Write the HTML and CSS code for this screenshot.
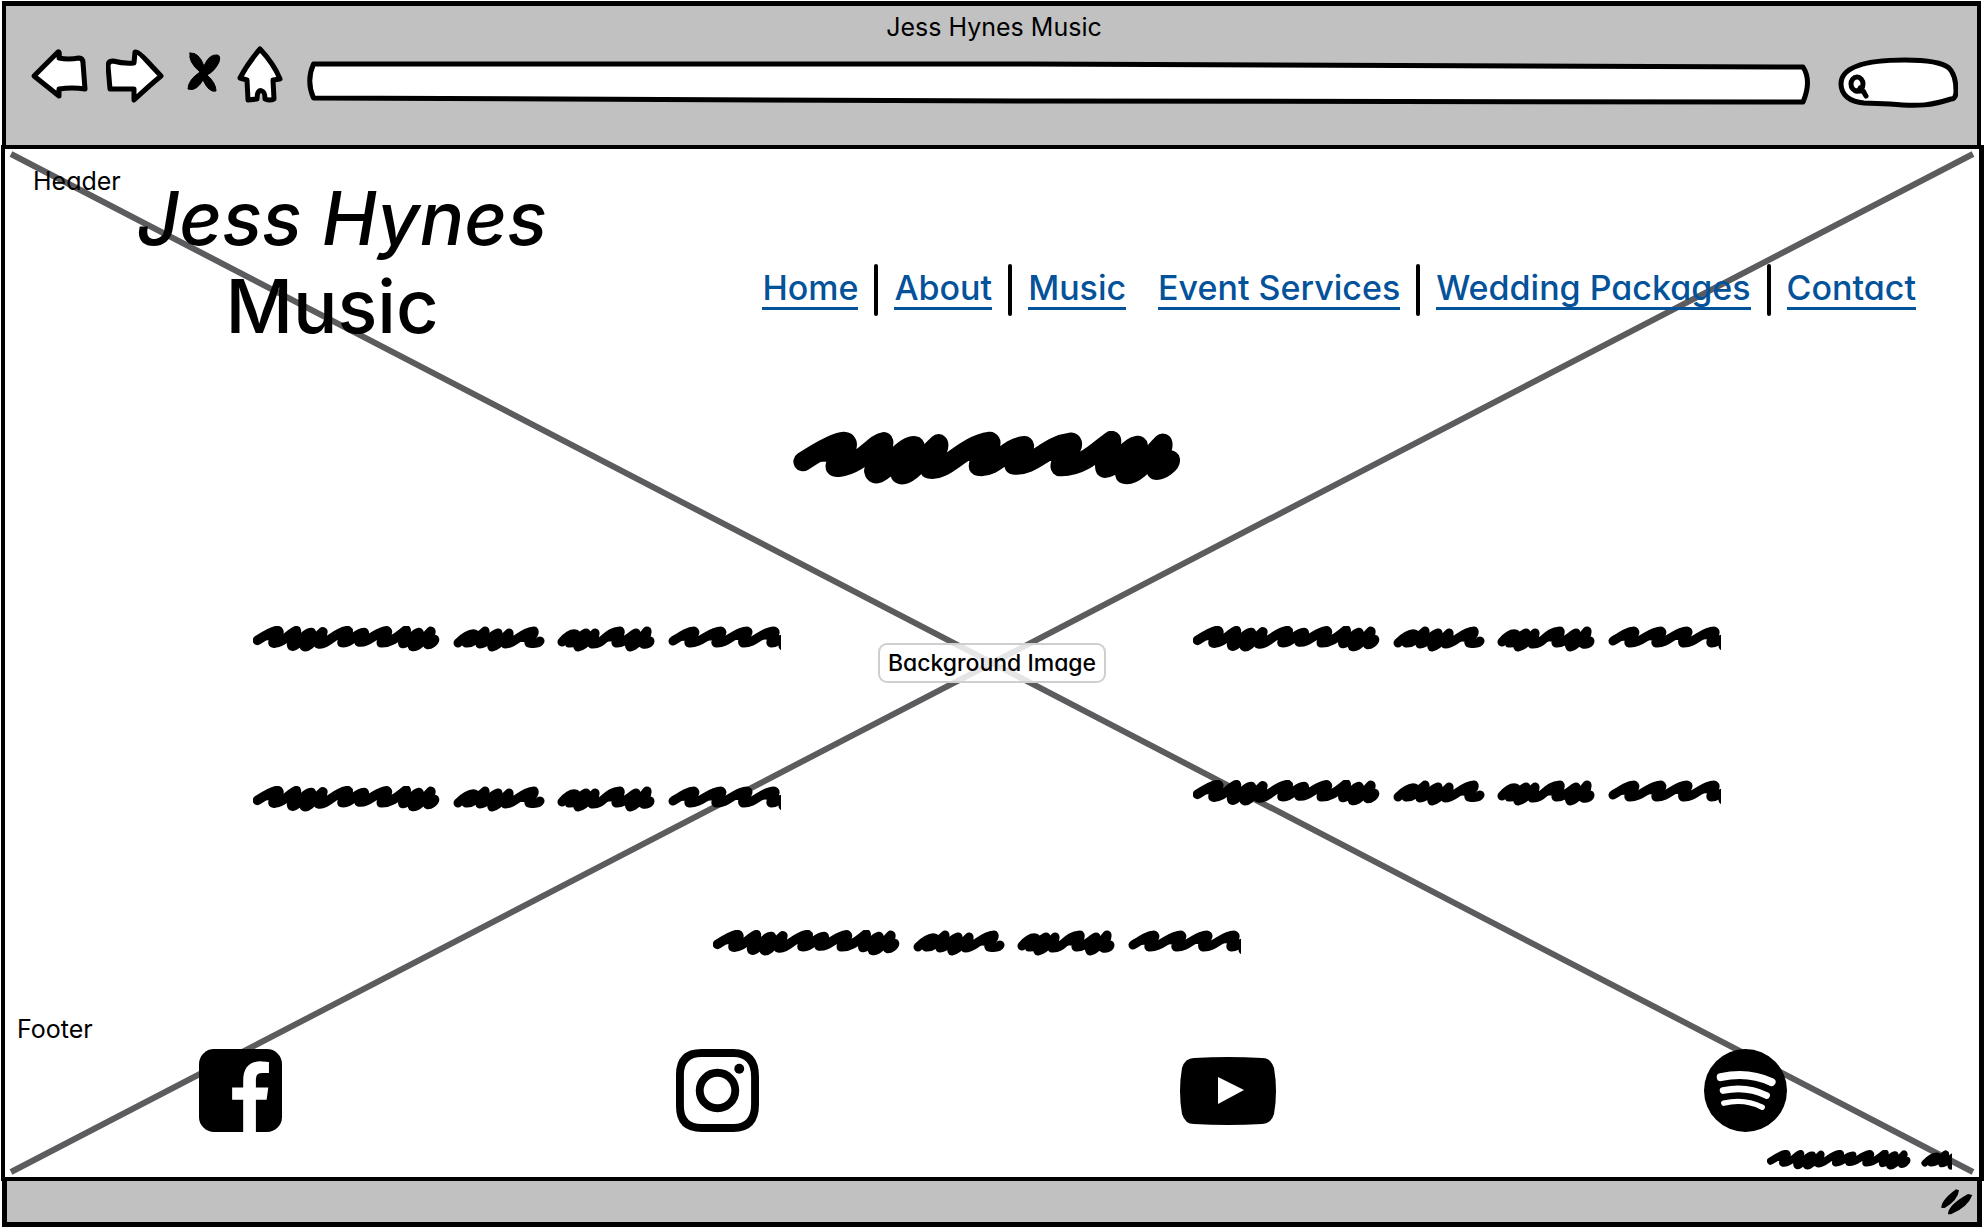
FILE: index.html
```html
<!DOCTYPE html>
<html lang="en">
<head>
<meta charset="utf-8">
<meta name="viewport" content="width=device-width, initial-scale=1">
<title>Jess Hynes Music</title>
<link rel="stylesheet" href="styles.css">
</head>
<body>
<svg class="defs" aria-hidden="true">
  <defs>
    <path id="long-word" d="M97 152 C140 124 195 92 220 91 C242 92 226 122 205 145 C190 163 190 172 205 169 C270 163 310 96 340 92 C344 110 315 150 310 180 C314 205 350 170 375 142 C405 108 425 103 434 104 C430 130 390 160 390 190 C410 202 460 140 505 98 C512 115 475 150 478 174 C530 184 575 104 660 91 C675 100 625 135 625 166 C680 174 705 108 764 104 C765 125 725 135 732 162 C790 170 830 102 905 93 C922 105 870 140 871 167 C940 170 990 112 1026 88 C1030 115 1000 145 1006 172 C1050 165 1070 108 1106 103 C1108 130 1060 160 1066 190 C1100 200 1145 130 1180 96 C1186 120 1150 150 1160 178 C1175 180 1205 158 1203 147"/>
    <g id="phrase">
      <use href="#long-word" transform="translate(-11 -10) scale(.16)" stroke-width="60"/>
      <path d="M205 17 C211 11 218 7 222 8 C223 12 214 12 213 17 C221 18 228 8 232 5 C233 9 226 12 227 18 C234 18 239 8 245 7 C246 12 237 16 239 21 C246 20 252 10 256 7 C257 12 250 15 252 18 C262 18 268 6 281 5 C283 9 274 13 276 17 C282 18 286 17 287 15"/>
      <path d="M309 16 C314 10 319 7 323 8 C324 12 315 14 316 17 C322 18 328 9 333 7 C334 12 323 16 325 21 C333 20 338 10 342 7 C343 12 336 15 339 18 C351 19 352 6 367 5 C369 9 362 13 363 17 C371 18 378 9 383 7 C384 12 374 16 377 21 C384 20 390 9 394 5 C395 11 389 14 390 18 C393 19 397 17 397 15"/>
      <path d="M420 15 C428 10 435 5 441 5 C445 7 434 13 436 17 C448 18 456 5 468 5 C472 7 461 13 463 17 C475 18 482 5 494 5 C498 7 487 13 490 17 C502 18 509 5 521 5 C525 7 516 13 518 17 C522 18 527 13 530 13"/>
      <path d="M530 13 V20"/>
    </g>
  </defs>
</svg>

<header class="chrome">
  <div class="window-title">Jess Hynes Music</div>
  <div class="toolbar">
    <button class="tool back" type="button" aria-label="Back"><svg viewBox="30 46 58 56"><path d="M34 75 L58 51 Q60 50 59 57 Q68 59 79 57 Q83 57 83 62 L85 88 Q72 86 59 88 L59 95 Z"/></svg></button>
    <button class="tool forward" type="button" aria-label="Forward"><svg viewBox="106 46 58 56"><path d="M110 88 L108 65 Q108 60 113 60 Q124 63 134 62 L135 51 Q138 50 147 60 L161 75 Q150 84 134 99 L134 88 Z"/></svg></button>
    <button class="tool stop" type="button" aria-label="Stop"><svg viewBox="186 46 36 56"><path d="M190 52 Q199 51 204 65 Q209 53 217 54 Q221 54 219 61 Q215 70 207 74 Q216 82 216 90 Q209 92 203 79 Q196 91 188 88 Q188 79 200 71 Q188 61 190 52 Z"/></svg></button>
    <button class="tool home" type="button" aria-label="Home page"><svg viewBox="236 44 48 60"><path d="M260 48 Q274 63 280 78 L273 79 L274 98 Q270 100 265 98 Q265 91 262 90 Q257 88 257 98 L248 99 L247 79 L240 77 Q248 62 260 48 Z"/></svg></button>
    <div class="address">
      <svg viewBox="0 0 100 44" preserveAspectRatio="none" aria-hidden="true"><path d="M.3 3 L48 3 L99.6 6 Q100.2 20 99.6 41 L48 40 L.3 37 Q-.2 20 .3 3 Z"/></svg>
      <input type="text" aria-label="Address">
    </div>
    <div class="search">
      <svg viewBox="1838 56 120 52" aria-hidden="true"><path d="M1841 83 C1841 64 1870 59 1905 59 C1928 59 1943 62 1949 67 C1955 73 1956 83 1956 90 Q1956 98 1951 98 C1932 104 1920 106 1890 103 L1864 102 C1850 101 1841 94 1841 83 Z"/><ellipse cx="1857" cy="83" rx="6" ry="7"/><path d="M1856 90 L1863 90 L1866 95 M1860 87 L1864 91"/></svg>
      <input type="search" aria-label="Search">
    </div>
  </div>
</header>

<main class="page">
  <div class="backdrop">
    <svg viewBox="0 0 100 100" preserveAspectRatio="none" aria-hidden="true"><path d="M0 0 L100 100 M0 100 L100 0"/></svg>
    <span class="backdrop-label">Background Image</span>
  </div>

  <section class="masthead">
    <span class="note">Header</span>
    <h1><em>Jess Hynes</em><br>Music&nbsp;</h1>
    <nav>
      <a href="#home">Home</a><i></i><a href="#about">About</a><i></i><a href="#music">Music</a><a class="apart" href="#events">Event Services</a><i></i><a href="#weddings">Wedding Packages</a><i></i><a href="#contact">Contact</a>
    </nav>
  </section>

  <svg class="scribble headline" viewBox="67 60 1168 162" aria-hidden="true"><use href="#long-word" stroke-width="58"/></svg>

  <section class="phrases">
    <svg class="scribble phrase" viewBox="0 0 528 26" aria-hidden="true"><use href="#phrase"/></svg>
    <svg class="scribble phrase" viewBox="0 0 528 26" aria-hidden="true"><use href="#phrase"/></svg>
    <svg class="scribble phrase" viewBox="0 0 528 26" aria-hidden="true"><use href="#phrase"/></svg>
    <svg class="scribble phrase raised" viewBox="0 0 528 26" aria-hidden="true"><use href="#phrase"/></svg>
  </section>
  <svg class="scribble phrase closing" viewBox="0 0 528 26" aria-hidden="true"><use href="#phrase"/></svg>

  <footer class="footer">
    <span class="note">Footer</span>
    <div class="social">
      <a href="#facebook" aria-label="Facebook"><svg width="83" height="83" viewBox="597 148 248 248"><rect x="597" y="148" width="248" height="248" rx="45"/><path class="cut" d="M729 397 V300 H696 V263 H729 V245 C729 200 750 184 785 185 L806 187 V220 H785 C770 220 767 228 767 245 V263 H804 L799 300 H767 V397 Z"/></svg></a>
      <a href="#instagram" aria-label="Instagram"><svg width="83" height="83" viewBox="0 0 84 84"><path class="line" d="M26 4 H58 Q80 4 80 28 V56 Q80 80 58 80 H26 Q4 80 4 58 V26 Q4 4 26 4 Z"/><circle class="line" cx="42" cy="42" r="18"/><circle cx="64" cy="20" r="5"/></svg></a>
      <a href="#youtube" aria-label="YouTube"><svg width="96" height="68" viewBox="0 0 96 68"><path d="M14 1 Q48 -1 82 1 Q91 1 94 11 Q98 34 94 57 Q91 67 82 67 Q48 69 14 67 Q5 67 2 57 Q-2 34 2 11 Q5 1 14 1 Z"/><path class="cut" d="M38 20 L64 33 L38 47 Z"/></svg></a>
      <a href="#spotify" aria-label="Spotify"><svg width="83" height="83" viewBox="72 58 248 248"><circle cx="196" cy="182" r="124"/><path class="arc" stroke-width="24" d="M122 142 Q205 124 274 157"/><path class="arc" stroke-width="20" d="M129 182 Q199 167 259 197"/><path class="arc" stroke-width="16" d="M131 220 Q192 205 246 232"/></svg></a>
    </div>
    <svg class="scribble credit" viewBox="0 0 240 26" aria-hidden="true"><use href="#phrase"/></svg>
  </footer>
</main>

<div class="statusbar">
  <svg width="32" height="26" viewBox="783 486 96 78" aria-hidden="true"><path d="M784 543 Q783 520 828 487 L837 490 Q834 520 794 543 Z M804 562 Q803 535 864 501 L877 504 Q864 540 813 562 Z"/></svg>
</div>
</body>
</html>
```
FILE: styles.css
```css
* { box-sizing: border-box; }

body {
  display: flex;
  flex-direction: column;
  min-height: 100vh;
  margin: 0;
  padding: 1px 0 3px 1px;
  background: #fff;
  color: #000;
  font-family: Inter, "Liberation Sans", sans-serif;
  font-feature-settings: "cv11";
  font-size: 25px;
  line-height: 30px;
}

svg { display: block; }
.defs { position: absolute; width: 0; height: 0; }

/* Browser window */
.chrome {
  margin: 0 3px 0 1px;
  padding: 6px 19px 37px 24px;
  border: solid #000;
  border-width: 5px 4px 0;
  background: #c1c1c1;
}
.window-title { text-align: center; }
.toolbar { display: flex; align-items: center; height: 66px; }
.toolbar svg { width: 100%; height: 100%; fill: #fff; stroke: #000; stroke-width: 5px; stroke-linejoin: round; stroke-linecap: round; }
.tool { flex: none; width: 58px; height: 56px; padding: 0; border: 0; background: none; }
.forward { margin-left: 18px; }
.stop { width: 36px; margin-left: 22px; }
.toolbar .stop svg { fill: #000; stroke-width: 1px; }
.home { width: 48px; height: 60px; margin-left: 14px; }
.address, .search { position: relative; height: 44px; }
.address { flex: 1; margin: 16px 29px 0 25px; }
.address path { vector-effect: non-scaling-stroke; }
.address svg { overflow: visible; }
.search { flex: none; width: 120px; height: 52px; margin-top: 16px; }
.search ellipse, .search ellipse + path { fill: none; }
.address input, .search input {
  position: absolute;
  inset: 8px 12px;
  width: calc(100% - 24px);
  padding: 0;
  border: 0;
  background: none;
  font: inherit;
}
.search input { left: 36px; width: calc(100% - 48px); }

/* Page */
.page {
  position: relative;
  display: flex;
  flex: 1;
  flex-direction: column;
  border: solid #000;
  border-width: 4px 5px 4px 4px;
}
.page > * { position: relative; }
.page > .backdrop { position: absolute; inset: 5px 6px; display: grid; place-items: center; }
.backdrop svg { position: absolute; width: 100%; height: 100%; overflow: visible; }
.backdrop path { fill: none; stroke: #5c5c5e; stroke-width: 6px; vector-effect: non-scaling-stroke; }
.backdrop-label {
  position: relative;
  padding: 3px 8px;
  border: 2px solid #cfcfcf;
  border-radius: 9px;
  background: rgba(255, 255, 255, .84);
  font-size: 23px;
  font-weight: 500;
}

.masthead { display: flex; padding: 17px 63px 0 28px; }
h1 {
  margin: 8px 0 0 16px;
  font-size: 74px;
  font-weight: 500;
  line-height: 88px;
  text-align: center;
  white-space: nowrap;
}
nav { display: flex; align-items: center; height: 52px; margin: 98px 0 0 auto; gap: 16px; }
nav a {
  padding-bottom: 2px;
  border-bottom: 3px solid #04529a;
  color: #04529a;
  font-size: 34px;
  font-weight: 500;
  line-height: 34px;
  text-decoration: none;
  white-space: nowrap;
}
nav i { width: 4px; height: 52px; border-radius: 2px; background: #000; }
.apart { margin-left: 16px; }

.scribble { fill: #000; stroke: #000; stroke-width: 9px; stroke-linecap: round; stroke-linejoin: round; }
.headline { width: 388px; height: 54px; margin: 81px 0 141px calc(50% - 199px); }
.phrases {
  display: grid;
  grid-template-columns: 940fr 786fr;
  gap: 134px 0;
  padding-left: 248px;
}
.phrase { width: 528px; height: 26px; }
.raised { margin-top: -6px; }
.closing { margin: 118px 0 57px calc(50% - 279px); }

.footer { margin-top: auto; padding: 0 27px 7px 12px; }
.note { display: block; }
.social {
  display: grid;
  grid-template-columns: 477fr 504fr 524fr 83px;
  align-items: center;
  margin-top: 5px;
  padding: 0 165px 0 182px;
}
.social a { width: max-content; }
.line { fill: none; stroke: #000; stroke-width: 8px; }
.cut { fill: #fff; }
.arc { fill: none; stroke: #fff; stroke-linecap: round; }
.credit { width: 185px; height: 20px; margin: 18px 0 0 auto; }

.statusbar {
  display: flex;
  align-items: center;
  justify-content: flex-end;
  height: 46px;
  margin: 0 2px 0 1px;
  padding-right: 4px;
  border: solid #000;
  border-width: 0 5px 5px;
  background: #c1c1c1;
}
```
